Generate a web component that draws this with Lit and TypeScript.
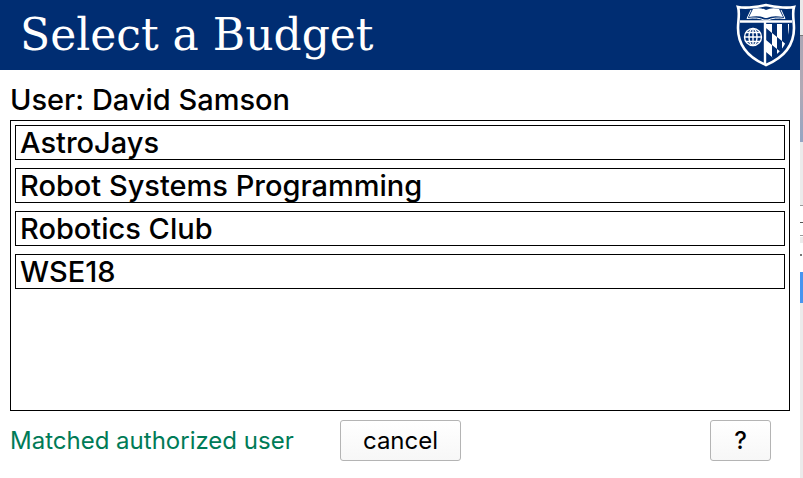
import { LitElement, html, css } from "lit";
import { customElement, property } from "lit/decorators.js";

@customElement("shield-logo")
class ShieldLogo extends LitElement {
  static styles = css`
    :host { display: block; width: 60px; height: 64px; }
    svg { display: block; width: 100%; height: 100%; }
  `;
  render() {
    return html`<svg viewBox="0 0 60 64" role="img" aria-label="University shield">
      <defs>
        <clipPath id="field"><path d="M30 21H53C53 37 48 49 30 58Z" /></clipPath>
      </defs>
      <path d="M2 4C12 6 20 4 30 2C40 4 48 6 58 4C56 10 58 18 58 25C58 41 49 54 30 62C11 54 2 41 2 25C2 18 4 10 2 4Z" fill="#002d72" stroke="#fff" stroke-width="2.6" />
      <path d="M4 18.500H56" stroke="#fff" stroke-width="2.4" />
      <path d="M17 6Q24 4 30 7Q36 4 43 6L47 14Q37 12 31 15H29Q23 12 13 14Z" fill="#fff" />
      <path d="M11 15.500Q22 14 28 17H32Q38 14 49 15.500L45 7M15 7L11 15.500" fill="none" stroke="#fff" stroke-width="1" />
      <g fill="none" stroke="#fff" stroke-width="1.4">
        <circle cx="17" cy="34" r="8.500" />
        <ellipse cx="17" cy="34" rx="4" ry="8.500" />
        <path d="M17 25V43M8 34H26M10 29.500H24M10 38.500H24" />
      </g>
      <g clip-path="url(#field)" fill="#fff">
        <path d="M30 20H36V30L30 25ZM30 37L36 42V54L30 49ZM36 30L41 34V46L36 42ZM36 54L41 58V64H36ZM41 20H46V38L41 34ZM41 46L46 50V62L41 58ZM46 38L52 43V55L46 50ZM52 20H56V46L52 43Z" />
      </g>
      <path d="M29 19V61" stroke="#fff" stroke-width="2.4" />
    </svg>`;
  }
}

@customElement("app-root")
class AppRoot extends LitElement {
  @property() user = "David Samson";
  budgets = ["AstroJays", "Robot Systems Programming", "Robotics Club", "WSE18"];

  static styles = css`
    :host {
      display: grid;
      grid-template-columns: 1fr 3px;
      min-height: 100vh;
      background: #fff;
      color: #000;
      font-family: Inter, "Noto Sans", sans-serif;
    }
    * { box-sizing: border-box; }
    .window { display: flex; flex-direction: column; min-width: 0; }
    header {
      display: flex;
      justify-content: space-between;
      align-items: center;
      height: 70px;
      padding: 0 4px 0 20px;
      background: #002d72;
      color: #fff;
    }
    h1 {
      margin: 0;
      font: 400 44px/68px "DejaVu Serif", serif;
      white-space: nowrap;
    }
    main {
      flex: 1;
      display: flex;
      flex-direction: column;
      padding: 10px 10px 17px;
    }
    h2 { margin: 0; font-size: 29px; font-weight: 500; line-height: 40px; }
    .list {
      flex: 1;
      display: flex;
      flex-direction: column;
      gap: 8px;
      margin: 0;
      padding: 4px;
      border: 1px solid #000;
      list-style: none;
    }
    .item {
      display: block;
      width: 100%;
      height: 35px;
      padding: 0 4px;
      border: 1px solid #000;
      background: #fff;
      color: #000;
      font: 500 29px/32px Inter, "Noto Sans", sans-serif;
      text-align: left;
    }
    .actions {
      display: grid;
      grid-template-columns: 330px 121px 1fr;
      align-items: center;
      padding: 9px 19px 0 0;
    }
    .status { color: #007b57; font-size: 24px; line-height: 40px; }
    .button {
      height: 41px;
      padding: 0;
      border: 1px solid #b4b4b4;
      border-radius: 3px;
      background: linear-gradient(#fff, #f7f7f7);
      color: #000;
      font: 400 24px/36px Inter, "Noto Sans", sans-serif;
    }
    .help { width: 61px; justify-self: end; font-weight: 500; }
    .edge { display: flex; flex-direction: column; background: #ebebeb; }
    .edge div { flex: none; }
    .glass { height: 35px; background: #e9e9e9; }
    .rim { height: 1px; background: #777; }
    .desktop { height: 106px; background: linear-gradient(#aaa7b5, #b1a9b5 50%, #94a5c3); }
    .panel { height: 63px; background: #ebebeb; }
    .line { height: 1px; background: #999; }
    .page { height: 66px; background: #fff; padding-top: 16px; }
    .mark { height: 1px; background: #555; margin-bottom: 12px; }
    .rule { height: 1px; background: #999; margin-bottom: 1px; }
    .band { height: 6px; background: #ebebeb; margin-bottom: 11px; }
    .dot { width: 2px; height: 2px; background: #777; }
    .selection { height: 31px; background: #4795f0; }
  `;

  render() {
    return html`
      <div class="window">
        <header><h1>Select a Budget</h1><shield-logo></shield-logo></header>
        <main>
          <h2>User: ${this.user}</h2>
          <ul class="list">
            ${this.budgets.map((b) => html`<li><button class="item">${b}</button></li>`)}
          </ul>
          <div class="actions">
            <span class="status" role="status">Matched authorized user</span>
            <button class="button">cancel</button>
            <button class="button help">?</button>
          </div>
        </main>
      </div>
      <div class="edge" aria-hidden="true">
        <div class="glass"></div><div class="rim"></div><div class="desktop"></div>
        <div class="panel"></div><div class="line"></div>
        <div class="page">
          <div class="mark"></div><div class="rule"></div><div class="band"></div><div class="dot"></div>
        </div>
        <div class="selection"></div>
      </div>
    `;
  }
}
